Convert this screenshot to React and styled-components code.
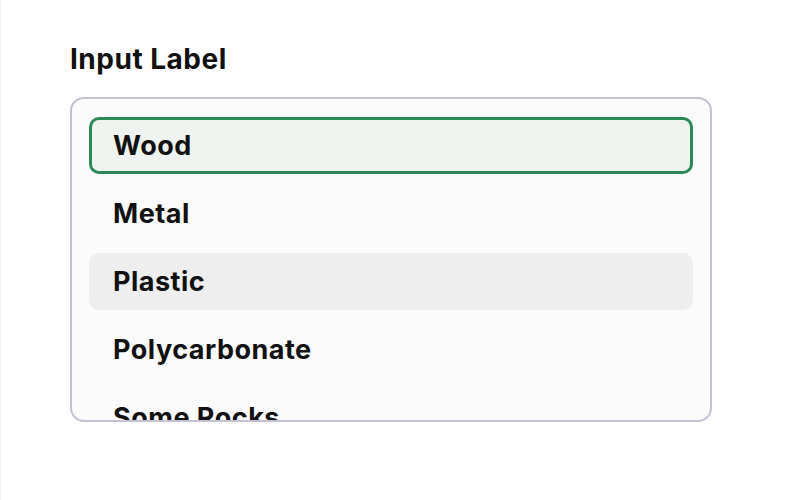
import React from "react";
import styled, { createGlobalStyle } from "styled-components";

const GlobalStyle = createGlobalStyle`
  html, body {
    margin: 0;
    padding: 0;
    background: #ffffff;
  }
  body {
    font-family: Inter, "Noto Sans", sans-serif;
  }
`;

const Page = styled.div`
  min-height: 500px;
  box-sizing: border-box;
  border-left: 1px solid #efefef;
  padding: 42px 0 0 69px;
`;

const Field = styled.div`
  display: flex;
  flex-direction: column;
  width: 642px;
`;

const Label = styled.label`
  font-size: 28px;
  font-weight: 700;
  letter-spacing: 0.5px;
  line-height: 34px;
  color: #111111;
  margin-bottom: 21px;
`;

const Listbox = styled.ul`
  list-style: none;
  margin: 0;
  box-sizing: border-box;
  height: 325px;
  padding: 18px 17px;
  border: 2px solid #c4c2d2;
  border-radius: 14px;
  background: #fbfbfb;
  overflow: hidden;
  display: flex;
  flex-direction: column;
  gap: 11px;
`;

const Option = styled.li`
  flex: none;
  box-sizing: border-box;
  height: 57px;
  display: flex;
  align-items: center;
  padding: 0 21px;
  border-radius: 10px;
  font-size: 27px;
  font-weight: 700;
  letter-spacing: 0.5px;
  color: #111111;
  border: 3px solid ${(p) => (p.selected ? "#2a8a56" : "transparent")};
  background: ${(p) =>
    p.selected ? "#eef3ef" : p.hovered ? "#eeeeee" : "transparent"};
`;

const options = ["Wood", "Metal", "Plastic", "Polycarbonate", "Some Rocks", "Glass"];

export default function App() {
  return (
    <>
      <GlobalStyle />
      <Page>
        <Field>
          <Label>Input Label</Label>
          <Listbox role="listbox">
            {options.map((o, i) => (
              <Option key={o} selected={i === 0} hovered={i === 2}>
                {o}
              </Option>
            ))}
          </Listbox>
        </Field>
      </Page>
    </>
  );
}
